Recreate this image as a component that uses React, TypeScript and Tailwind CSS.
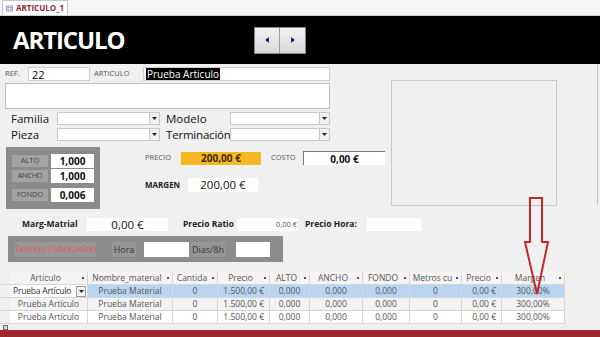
import React from "react";

function Combo({ className }: { className: string }) {
  return (
    <div className={`h-[13px] bg-white border border-[#c8c8c8] flex justify-end ${className}`}>
      <div className="w-[10px] h-full bg-[#f0f0f0] border-l border-[#c8c8c8] flex items-center justify-center">
        <svg width="5" height="3" viewBox="0 0 5 3"><polygon points="0,0 5,0 2.5,3" fill="#222" /></svg>
      </div>
    </div>
  );
}

const cols = [
  { name: "Articulo", w: "w-[78px]" },
  { name: "Nombre_material", w: "w-[85px]" },
  { name: "Cantida", w: "w-[45px]" },
  { name: "Precio", w: "w-[52px]" },
  { name: "ALTO", w: "w-[40px]" },
  { name: "ANCHO", w: "w-[53px]" },
  { name: "FONDO", w: "w-[47px]" },
  { name: "Metros cu", w: "w-[52px]" },
  { name: "Precio", w: "w-[40px]" },
  { name: "Margen", w: "w-[63px]" },
];

const vals = ["Prueba Artículo", "Prueba Material", "0", "1.500,00 €", "0,000", "0,000", "0,000", "0", "0,00 €", "300,00%"];

function Row({ idx }: { idx: number }) {
  const bg = idx === 0 ? "bg-[#b9d5f4]" : idx === 1 ? "bg-[#f3f3f3]" : "bg-white";
  return (
    <div className="flex h-[13px]">
      <div className="w-[10px] h-full border-b border-[#d6d6d6] bg-[#f0f0f0]" />
      {cols.map((c, i) => {
        if (i === 0 && idx === 0) {
          return (
            <div key={i} className={`${c.w} h-full bg-white border-b border-r border-[#d6d6d6] flex items-center justify-between pl-[3px] pr-[1px]`}>
              <span className="text-[8.5px] text-[#333] leading-none whitespace-nowrap tracking-[-0.2px]">Prueba Artículo</span>
              <div className="w-[10px] h-[11px] shrink-0 bg-[#f0f0f0] border border-[#9a9a9a] flex items-center justify-center">
                <svg width="5" height="3" viewBox="0 0 5 3"><polygon points="0,0 5,0 2.5,3" fill="#222" /></svg>
              </div>
            </div>
          );
        }
        const align = i === 3 || i === 8 ? "justify-end pr-[5px]" : "justify-center";
        return (
          <div key={i} className={`${c.w} h-full ${bg} border-b border-r border-[#d6d6d6] flex items-center ${align}`}>
            <span className="text-[8.5px] text-[#555] leading-none whitespace-nowrap">{vals[i]}</span>
          </div>
        );
      })}
    </div>
  );
}

export default function App() {
  return (
    <div className="relative w-[600px] h-[337px] overflow-hidden bg-[#f0f0f0] font-['Open_Sans',sans-serif] text-[#222]">
      {/* tab bar */}
      <div className="h-[16px] bg-[#f6f6f6] border-b border-[#cfcfcf] flex items-end">
        <div className="ml-[2px] h-[15px] w-[66px] bg-white border border-b-0 border-[#c8c8c8] flex items-center gap-[3px] px-[3px]">
          <svg width="11" height="9" viewBox="0 0 11 9">
            <rect x="0.5" y="0.5" width="10" height="8" fill="#eef2f8" stroke="#6c7fa0" />
            <rect x="2" y="2.5" width="3" height="1" fill="#5070a0" />
            <rect x="6" y="2.5" width="3" height="1" fill="#5070a0" />
            <rect x="2" y="5" width="3" height="1" fill="#5070a0" />
            <rect x="6" y="5" width="3" height="1" fill="#5070a0" />
          </svg>
          <span className="text-[8px] font-bold text-[#8a2a3a] leading-none">ARTICULO_1</span>
        </div>
      </div>

      {/* header */}
      <div className="h-[48px] bg-black flex items-center">
        <div className="ml-[13px] w-[241px] text-white font-bold text-[24px] leading-none tracking-[-1.1px]">ARTICULO</div>
        <div className="flex h-[27px] border border-[#888]">
          <div className="w-[25px] h-full bg-gradient-to-b from-[#f2f2f2] to-[#d9d9d9] border-r border-[#9a9a9a] flex items-center justify-center">
            <svg width="4" height="6" viewBox="0 0 4 6"><polygon points="4,0 4,6 0,3" fill="#1c2a6a" /></svg>
          </div>
          <div className="w-[25px] h-full bg-gradient-to-b from-[#f2f2f2] to-[#d9d9d9] flex items-center justify-center">
            <svg width="4" height="6" viewBox="0 0 4 6"><polygon points="0,0 0,6 4,3" fill="#1c2a6a" /></svg>
          </div>
        </div>
      </div>

      {/* top section */}
      <div className="h-[145px] flex">
        <div className="w-[388px] flex flex-col">
          {/* row A */}
          <div className="mt-[3px] h-[14px] flex items-center">
            <span className="ml-[5px] w-[23px] text-[7.5px] text-[#555] leading-none">REF.</span>
            <div className="w-[62px] h-[14px] bg-white border border-[#cfcfcf] flex items-center pl-[3px]">
              <span className="text-[11px] leading-none text-black">22</span>
            </div>
            <span className="ml-[4px] w-[49px] text-[7.5px] text-[#555] leading-none">ARTICULO</span>
            <div className="w-[187px] h-[14px] bg-white border border-[#cfcfcf] flex items-center pl-[2px]">
              <span className="text-[10px] leading-[12px] bg-black text-white px-[1px]">Prueba Articulo</span>
            </div>
          </div>
          {/* row B */}
          <div className="mt-[2px] ml-[5px] w-[325px] h-[26px] bg-white border border-[#bdbdbd]" />
          {/* row C */}
          <div className="mt-[3px] h-[13px] flex items-center">
            <span className="ml-[11px] w-[46px] text-[11.5px] leading-none text-[#111]">Familia</span>
            <Combo className="w-[103px]" />
            <span className="ml-[6px] w-[64px] text-[11.5px] leading-none text-[#111]">Modelo</span>
            <Combo className="w-[100px]" />
          </div>
          {/* row D */}
          <div className="mt-[3px] h-[13px] flex items-center">
            <span className="ml-[11px] w-[46px] text-[11.5px] leading-none text-[#111]">Pieza</span>
            <Combo className="w-[103px]" />
            <span className="ml-[6px] w-[64px] text-[11.5px] leading-none text-[#111] tracking-[-0.2px]">Terminación</span>
            <Combo className="w-[100px]" />
          </div>
          {/* section E */}
          <div className="mt-[6px] h-[62px] flex">
            <div className="ml-[6px] w-[94px] h-full bg-[#8b8b8b] flex flex-col pt-[7px]">
              <div className="h-[14px] flex items-center">
                <div className="ml-[6px] w-[36px] h-[12px] bg-[#a3a3a3] flex items-center justify-center text-[7.5px] text-[#444] leading-none">ALTO</div>
                <div className="ml-[3px] w-[43px] h-[14px] bg-white flex items-center justify-center text-[10px] font-bold leading-none text-[#111]">1,000</div>
              </div>
              <div className="mt-[1px] h-[14px] flex items-center">
                <div className="ml-[6px] w-[36px] h-[12px] bg-[#a3a3a3] flex items-center justify-center text-[7.5px] text-[#444] leading-none tracking-[-0.4px]">ANCHO</div>
                <div className="ml-[3px] w-[43px] h-[14px] bg-white flex items-center justify-center text-[10px] font-bold leading-none text-[#111]">1,000</div>
              </div>
              <div className="mt-[5px] h-[14px] flex items-center">
                <div className="ml-[6px] w-[36px] h-[12px] bg-[#a3a3a3] flex items-center justify-center text-[7.5px] text-[#444] leading-none">FONDO</div>
                <div className="ml-[3px] w-[43px] h-[14px] bg-white flex items-center justify-center text-[10px] font-bold leading-none text-[#111]">0,006</div>
              </div>
            </div>
            <div className="ml-[45px] flex flex-col">
              <div className="mt-[4px] h-[14px] flex items-center">
                <span className="w-[36px] text-[7.5px] text-[#555] leading-none">PRECIO</span>
                <div className="w-[80px] h-[13px] bg-[#f7b723] flex items-center justify-center text-[10px] font-bold leading-none text-[#3a2a00]">200,00 €</div>
                <span className="ml-[10px] w-[32px] text-[7.5px] text-[#555] leading-none">COSTO</span>
                <div className="w-[82px] h-[14px] bg-white border-t border-l border-[#777] flex items-center justify-center text-[10px] font-bold leading-none text-[#111]">0,00 €</div>
              </div>
              <div className="mt-[13px] h-[14px] flex items-center">
                <span className="w-[43px] text-[8px] font-bold text-[#222] leading-none">MARGEN</span>
                <div className="w-[70px] h-[14px] bg-white flex items-center justify-center text-[11.5px] leading-none text-[#111]">200,00 €</div>
              </div>
            </div>
          </div>
        </div>
        <div className="ml-[3px] mt-[16px] w-[166px] h-[126px] border border-[#c9c9c9]" />
        <div className="ml-auto mr-[2px] w-px h-[141px] bg-[#c4c4c4]" />
      </div>

      {/* Marg row */}
      <div className="mt-[9px] h-[13px] flex items-center">
        <span className="ml-[22px] w-[65px] text-[8.5px] font-bold leading-none text-[#222]">Marg-Matrial</span>
        <div className="w-[81px] h-[13px] bg-white flex items-center justify-center text-[11.5px] leading-none text-[#111]">0,00 €</div>
        <span className="ml-[15px] w-[55px] text-[8.5px] font-bold leading-none text-[#222]">Precio Ratio</span>
        <div className="w-[60px] h-[13px] bg-white flex items-center justify-end pr-[1px] text-[7.5px] leading-none text-[#555]">0,00 €</div>
        <span className="ml-[7px] w-[62px] text-[8.5px] font-bold leading-none text-[#222]">Precio Hora:</span>
        <div className="w-[54px] h-[13px] bg-white" />
      </div>

      {/* gray box 2 */}
      <div className="mt-[5px] ml-[8px] w-[275px] h-[26px] bg-[#8c8c8c] flex items-center">
        <div className="ml-[7px] w-[81px] h-[15px] bg-[#979797] flex items-center justify-center text-[9.5px] leading-none text-[#e25c5c] whitespace-nowrap tracking-[-0.2px]">Tiempo Fabricacion</div>
        <div className="ml-[16px] w-[24px] h-[15px] bg-[#979797] flex items-center justify-center text-[9px] leading-none text-[#333]">Hora</div>
        <div className="ml-[8px] w-[45px] h-[15px] bg-white" />
        <div className="ml-[2px] w-[34px] h-[15px] bg-[#979797] flex items-center justify-center text-[9px] leading-none text-[#333] whitespace-nowrap">Dias/8h</div>
        <div className="ml-[11px] w-[34px] h-[15px] bg-white" />
      </div>

      {/* datasheet */}
      <div className="mt-[10px] flex flex-col">
        <div className="flex h-[13px]">
          <div className="w-[10px] h-full border-b border-[#d6d6d6]" />
          {cols.map((c, i) => (
            <div key={i} className={`${c.w} h-full bg-[#f4f4f4] border-b border-r border-[#d6d6d6] flex items-center justify-center pr-[6px] relative`}>
              <span className="text-[8.5px] text-[#555] leading-none whitespace-nowrap">{c.name}</span>
              <span className="absolute right-[3px] top-[5px] w-[2px] h-[2px] bg-[#555]" />
            </div>
          ))}
        </div>
        <Row idx={0} />
        <Row idx={1} />
        <Row idx={2} />
        <div className="h-[6px] flex items-center">
          <div className="ml-[3px] w-[5px] h-[5px] border border-[#666] bg-[#ddd]" />
        </div>
      </div>

      {/* bottom bar */}
      <div className="h-[7px] bg-[#a3282c]" />

      {/* red arrow overlay */}
      <svg className="absolute left-[522px] top-[195px]" width="28" height="102" viewBox="0 0 28 102">
        <polygon points="8,3 20,3 20,47 26,47 15,99 3,47 8,47" fill="none" stroke="#c62828" strokeWidth="2" strokeLinejoin="miter" />
      </svg>
    </div>
  );
}
